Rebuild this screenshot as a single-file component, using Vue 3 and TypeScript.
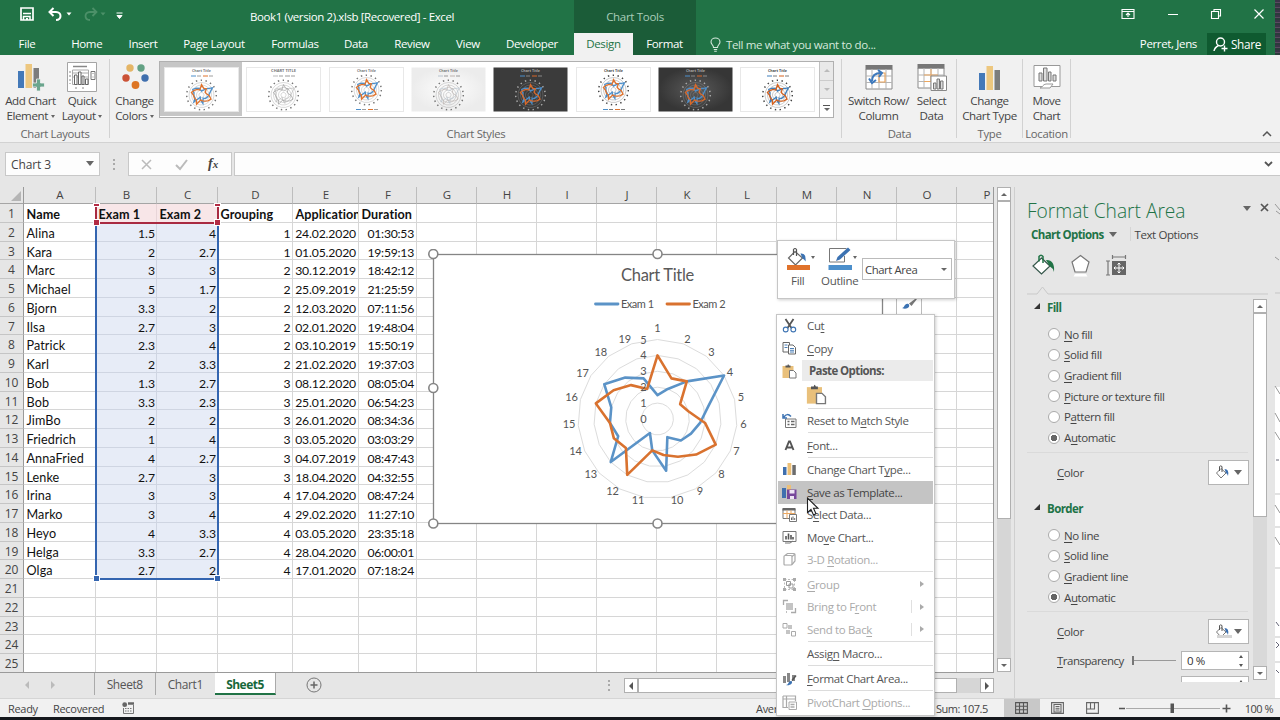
<script setup lang="ts">
interface IconDef { w: number; h: number; b: string }

const sheetGrid = '<path d="M1 5h26v20H1z" fill="#fff" stroke="#8a8a8a"/><path d="M.5 1h27v4.500H.5z" fill="#777"/><path d="M1 12h26M1 18.500h26M7 5v20M14 5v20M21 5v20" stroke="#b5b5b5" fill="none"/>'
const bucket = '<path d="M8 4.500 15.500 11 8.500 18 1.500 11z" fill="#fff" stroke="#666" stroke-width="1.200"/><path d="M6.500 8V2.500q1.500-2 3 0V9" fill="none" stroke="#555" stroke-width="1.200"/>'

const icons: Record<string, IconDef> = {
  save: { w: 14, h: 14, b: '<path d="M1 1h12v12H1z" fill="none" stroke="#fff" stroke-width="1.700"/><path d="M3 6.500h8M3.500 13V9.500h6.500V13" fill="none" stroke="#fff" stroke-width="1.500"/><path d="M6 11h2v2H6z" fill="#fff"/>' },
  undo: { w: 14, h: 14, b: '<path d="M5.500 1 1.500 5l4 4M2 5h6c6 0 6 8 0 8" fill="none" stroke="#fff" stroke-width="2"/>' },
  redo: { w: 14, h: 14, b: '<path d="M8.500 1 12.500 5l-4 4M12 5H6c-6 0-6 8 0 8" fill="none" stroke="#4c9068" stroke-width="1.800"/>' },
  caret: { w: 6, h: 4, b: '<path d="M.5.5h5L3 3.500z" fill="currentColor"/>' },
  customize: { w: 7, h: 7, b: '<path d="M.5 1h6M1 3.500h5L3.500 6.500z" stroke="#fff" fill="#fff" stroke-width="1"/>' },
  ribbonOpt: { w: 14, h: 12, b: '<path d="M1 1.500h12v9H1zM1 3.500h12M7 9V5.500M5 7l2-2 2 2" fill="none" stroke="#fff" stroke-width="1.100"/>' },
  min: { w: 12, h: 12, b: '<path d="M1 6.500h10" stroke="#fff"/>' },
  restore: { w: 12, h: 12, b: '<path d="M1.500 3.500h7v7h-7zM4 3V1.500h6.500V8H9" fill="none" stroke="#fff" stroke-width="1.100"/>' },
  close: { w: 12, h: 12, b: '<path d="m1.500 1.500 9 9M10.500 1.500l-9 9" stroke="#fff" stroke-width="1.200"/>' },
  bulb: { w: 11, h: 15, b: '<path d="M3.500 10.500C3.500 8 1 7.500 1 5a4.500 4 0 0 1 9 0c0 2.500-2.500 3-2.500 5.500zM3.800 12.500h3.400M4.200 14.200h2.600" fill="none" stroke="#d5e8dc" stroke-width="1.100"/>' },
  person: { w: 15, h: 15, b: '<circle cx="7.500" cy="5" r="4" fill="none" stroke="#fff" stroke-width="1.400"/><path d="M1 14c.5-3 2.500-4.500 4.500-5.500M11.500 8.500v6M8.500 11.500h6" fill="none" stroke="#fff" stroke-width="1.400"/>' },
  addElement: { w: 27, h: 27, b: '<path d="M1 8h6v17H1z" fill="#4479b8"/><path d="M8.500 1H15v24H8.500z" fill="#edc77f"/><path d="M16.500 5H22v20h-5.500z" fill="#7d7d7d"/><path d="M19.500 16h4v4h4v4h-4v4h-4v-4h-4v-4h4z" fill="#6aa58d" stroke="#f1f1f1" stroke-width=".8"/>' },
  quickLayout: { w: 30, h: 30, b: '<path d="M.5.500h29v29H.5z" fill="#fff" stroke="#a5a5a5"/><path d="M6 4.500h14" stroke="#888" stroke-width="1.500"/><path d="M5.500 8v14.500h16V8zM5.500 11h16M5.500 15h16" fill="none" stroke="#aaa"/><path d="M7.500 13h2.500v9.500H7.500zM11.500 10H14v12.500h-2.500zM15 14h2v8.500h-2zM18.500 17h2.500v5.500h-2.500z" fill="#fff" stroke="#666"/><path d="M24 9.500h4v8h-4z" fill="none" stroke="#777"/><path d="M25.500 11.500h1M25.500 15h1M3 9v13M8 26h4M15 26h4" stroke="#888" stroke-dasharray="2 2"/>' },
  colors: { w: 28, h: 26, b: '<circle cx="9" cy="4" r="3.700" fill="#e4b566"/><circle cx="20" cy="4" r="3.700" fill="#63a184"/><circle cx="5" cy="14" r="3.700" fill="#cb5236"/><circle cx="24" cy="14" r="3.700" fill="#3f6fae"/><circle cx="14.500" cy="21" r="3.900" fill="#dd7524"/>' },
  switchRow: { w: 28, h: 26, b: sheetGrid + '<path d="M14 9h6v9h-6z" fill="none" stroke="#eba760" stroke-width="1.200"/><path d="M7 17c0-6 4-8 9-8M4 14.500l3 4.500 4-3M13 6l4 3-3 4" fill="none" stroke="#3d79bd" stroke-width="2"/>' },
  selectData: { w: 30, h: 28, b: sheetGrid + '<path d="M7 12h14M7 18.500h7M14 6v12" stroke="#eba760" fill="none"/><path d="M14 13h15.500v14.500H14z" fill="#fff" stroke="#888"/><path d="M16.500 20h2.500v6h-2.500zM20 16h2.500v10H20zM23.500 18H26v8h-2.500z" fill="#ddd" stroke="#777"/>' },
  chartType: { w: 23, h: 25, b: '<path d="M1 8h6v17H1z" fill="#4479b8"/><path d="M8.500 1H15v24H8.500z" fill="#edc77f"/><path d="M16.500 5H22v20h-5.500z" fill="#7d7d7d"/>' },
  moveChart: { w: 28, h: 26, b: '<path d="M1 1.500h26v21H1z" fill="#fff" stroke="#999"/><path d="M6 9h3v8H6zM10.500 4H14v13h-3.500zM15.500 8H18v9h-2.500zM20 11h3v6h-3z" fill="#ddd" stroke="#777"/><path d="M7 24c2 0 3-4 6-4h7l-3 4z" fill="#fff" stroke="#999"/>' },
  bucketOrange: { w: 23, h: 23, b: bucket + '<path d="M13.500 6.500q6-1 5 8-1-2-3-3z" fill="#3b72b2"/><path d="M0 18h23v5H0z" fill="#e0722b"/>' },
  outline: { w: 24, h: 23, b: '<path d="M1.500 1.500h17M1.500 1.500V15M1.500 15h15V9" fill="none" stroke="#777"/><path d="m8 14 1.500-4L20 .5l2.500 2.500L12 12.500z" fill="#3b72b2"/><path d="M.5 18H24v5H.5z" fill="#4c8fcb"/>' },
  brush: { w: 16, h: 12, b: '<path d="M1 9c3 0 2-5 6.500-4 2.500 3-2 6-6.500 4z" fill="#3b72b2"/><path d="M8 4.500 14 0h2l-5.500 7z" fill="#777"/>' },
  cut: { w: 15, h: 15, b: '<path d="M3.500 1 9.500 10M11.500 1l-6 9" stroke="#555" stroke-width="1.800"/><circle cx="3.700" cy="11.500" r="2.400" fill="none" stroke="#3b72b2" stroke-width="1.100"/><circle cx="11.300" cy="11.500" r="2.400" fill="none" stroke="#3b72b2" stroke-width="1.100"/>' },
  copy: { w: 15, h: 15, b: '<path d="M1 1.500h6.500V11H1z" fill="#fff" stroke="#666"/><path d="M6.500 4h4.500l2.500 2.500V13h-7z" fill="#fff" stroke="#666"/><path d="M2.500 4h3M2.500 6.500h3M8 7.500h4M8 9.300h4M8 11h4" stroke="#4d80b8"/>' },
  paste: { w: 15, h: 16, b: '<path d="M.5 3h11v12H.5z" fill="#e9c07b"/><path d="M3.500 2.500h2q.5-2.500 1.500 0h1.500v2h-5z" fill="#555"/><path d="M7.500 7.500h4l2.500 2.500v5H7.500z" fill="#fff" stroke="#777"/>' },
  reset: { w: 15, h: 15, b: '<path d="M3.500 6H14v8.500H3.500z" fill="#fff" stroke="#777"/><path d="M5.500 8.500h2M9 8.500h3.500M5.500 11.500h2M9 11.500h3.500" stroke="#666" stroke-width="1.400"/><path d="M9 3.500Q5-.5 2 4M1 1v4h4" fill="none" stroke="#3b72b2" stroke-width="1.500"/>' },
  fontA: { w: 15, h: 15, b: '<path d="M3.500 12 7 3.500h1L11.500 12M5 9.500h5" fill="none" stroke="#555" stroke-width="1.900"/>' },
  bars: { w: 15, h: 14, b: '<path d="M1 5h3.500v8H1z" fill="#3f6fae"/><path d="M5.500 1h3.800v12H5.500z" fill="#edc077"/><path d="M10.300 3h3.500v10h-3.500z" fill="#6c6c6c"/>' },
  saveTpl: { w: 15, h: 14, b: '<path d="M0 3h4v10H0z" fill="#3f6fae"/><path d="M5 0h4v6H5z" fill="#edc077"/><path d="M5 4.500h9.500V14H5z" fill="#77479b"/><path d="M7.500 5h5v3.500h-5zM8 11h4v3H8z" fill="#efe6f5"/>' },
  selData: { w: 15, h: 15, b: '<path d="M1 2h12v9.500H1z" fill="#fff" stroke="#777"/><path d="M.5 1h13v2.500H.5z" fill="#666"/><path d="M1 6.500h12M5 3.500v8M9 3.500v8" stroke="#eba760"/><path d="M7.500 7.500h7v7h-7z" fill="#fff" stroke="#777"/><path d="M9.500 13v-2.500M11 13V9.500M12.700 13v-2" stroke="#666"/>' },
  movChart: { w: 15, h: 14, b: '<path d="M1 1.500h13v10H1z" fill="#fff" stroke="#777"/><path d="M4 9.500V6M6.500 9.500V3.500M9 9.500V5M11 9.500V7" stroke="#555" stroke-width="1.600"/><path d="M3 13h5l3-2" fill="none" stroke="#777"/>' },
  rot3d: { w: 15, h: 14, b: '<path d="M2 4.500q0-1 1-1h6q1 0 1 1V12q0 1-1 1H3q-1 0-1-1z" fill="#fff" stroke="#aaa" stroke-width="1.200"/><path d="M3 3.500 5.500 1.500H12q1 0 1 1V9l-3 3.500M10 4.500l3-2.500" fill="none" stroke="#aaa" stroke-width="1.200"/>' },
  group: { w: 15, h: 15, b: '<path d="M2.500 2.500h10v10h-10z" fill="none" stroke="#bbb" stroke-dasharray="2 1.500"/><path d="M4.500 4.500h4v4h-4zM7 7h4v4H7z" fill="none" stroke="#999"/><path d="M1 1h3v3H1zM11 1h3v3h-3zM1 11h3v3H1zM11 11h3v3h-3z" fill="#aaa"/>' },
  front: { w: 15, h: 15, b: '<path d="M1.500 6V1.500H6M5 13h-1M9 13.500h4.500V9" stroke="#aaa" fill="none" stroke-width="1.300"/><path d="M4 4h7v7H4z" fill="#c4c4c4"/>' },
  back: { w: 15, h: 15, b: '<path d="M1 1.500h4V6H1zM9.500 9.500h4V14h-4z" fill="#fff" stroke="#aaa"/><path d="M6 3h4v4H6zM4 8h4v4H4z" fill="#c4c4c4"/>' },
  none: { w: 15, h: 15, b: '' },
  fmtArea: { w: 15, h: 15, b: '<path d="M1 5h3v7H1zM5 2h3v9H5zM10 4h3v6h-3z" fill="#888"/><path d="M4 14c3 0 2-4.500 5.500-4 2 2.500-2 5-5.500 4z" fill="#3b72b2"/><path d="m10 9.500 4-5" stroke="#555" stroke-width="1.500"/>' },
  pivot: { w: 15, h: 15, b: '<path d="M1 1h12.500v5M1 1v11.500h5M1 4h12M4.500 1v11" fill="none" stroke="#aaa" stroke-width="1.200"/><path d="M7 7h7.500v7.500H7z" fill="#fff" stroke="#aaa"/><path d="M8.500 9.500h4M8.500 12h4" stroke="#aaa" stroke-width="1.300"/>' },
  bucketGreen: { w: 23, h: 23, b: '<path d="M9.500 4 18 12 9.500 20 1 12z" fill="#fff" stroke="#35564a" stroke-width="1.200"/><path d="M7 7.500V2.500Q9 0 11 2.500V9" fill="none" stroke="#217346" stroke-width="1.500"/><path d="M14 6q9-.5 8 12-1-4-4-5.500z" fill="#217346"/>' },
  pentagon: { w: 21, h: 23, b: '<path d="M10.500 1.500 19 8l-3 10H5L2 8z" fill="#fff" stroke="#777" stroke-width="1.200"/><path d="M5 20h11l1.500 2.500h-14z" fill="#fff"/>' },
  sizeIcon: { w: 21, h: 22, b: '<path d="M0 7h4M0 21h4M2 7v14M6.500 1v4M19.500 1v4M6.500 3h13" stroke="#777" stroke-width="1.200" fill="none"/><path d="M6 7h14v14H6z" fill="#666"/><path d="M13 9v10M8 14h10M11.500 10.500 13 9l1.500 1.500M11.500 17.500 13 19l1.500-1.500M9.500 12.500 8 14l1.500 1.500M16.500 12.500 18 14l-1.500 1.500" stroke="#fff" fill="none"/>' },
  smallBucket: { w: 14, h: 15, b: '<path d="M6 3.500 11 8l-5 5L1.500 8z" fill="#fff" stroke="#777"/><path d="M4.500 6V1.500q1-1.200 2.500 0V7" fill="none" stroke="#555"/><path d="M9.500 4q5 0 3.500 7-.5-2-2-3z" fill="#3b6fb0"/>' },
  plusCircle: { w: 16, h: 16, b: '<circle cx="8" cy="8" r="7" fill="none" stroke="#777"/><path d="M4.500 8h7M8 4.500v7" stroke="#666" stroke-width="1.500"/>' },
  macro: { w: 12, h: 12, b: '<circle cx="2.700" cy="2.700" r="2.400" fill="#666"/><path d="M6 1.500h6" stroke="#666" stroke-width="2.500"/><path d="M1.500 6v5.500h10V3" fill="none" stroke="#777"/><path d="M3 6.500h7M3 9h7" stroke="#777" stroke-dasharray="1.500 1"/>' },
  viewNormal: { w: 13, h: 12, b: '<path d="M.6.600h11.800v10.800H.6zM.6 4.200h11.800M.6 7.800h11.800M4.500.6v10.800M8.500.6v10.800" fill="none" stroke="#555" stroke-width="1.100"/>' },
  viewPage: { w: 13, h: 12, b: '<path d="M.6.600h11.800v10.800H.6zM3 2.500h7v7.500H3z" fill="none" stroke="#666" stroke-width="1.100"/><path d="M4.500 4.500h4M4.500 6.300h4M4.500 8h4" stroke="#666"/>' },
  viewBreak: { w: 13, h: 12, b: '<path d="M.6.600h11.800v10.800H.6zM4.500.6V7H9M8.500.6V7M.6 7H4" fill="none" stroke="#666" stroke-width="1.100"/>' },
}

const tabs = [
  { t: 'File', c: 'w-file' }, { t: 'Home', c: 'w-home' }, { t: 'Insert', c: 'w-insert' },
  { t: 'Page Layout', c: 'w-page' }, { t: 'Formulas', c: 'w-formulas' }, { t: 'Data', c: 'w-data' },
  { t: 'Review', c: 'w-review' }, { t: 'View', c: 'w-view' }, { t: 'Developer', c: 'w-dev' },
  { t: 'Design', c: 'w-design' }, { t: 'Format', c: 'w-format' },
]

const exam1 = [1.5, 2, 3, 5, 3.3, 2.7, 2.3, 2, 1.3, 3.3, 2, 1, 4, 2.7, 3, 3, 4, 3.3, 2.7]
const exam2 = [4, 2.7, 3, 1.7, 2, 3, 4, 3.3, 2.7, 2.3, 2, 4, 2.7, 3, 3, 4, 3.3, 2.7, 2]
const names = ['Alina', 'Kara', 'Marc', 'Michael', 'Bjorn', 'Ilsa', 'Patrick', 'Karl', 'Bob', 'Bob', 'JimBo', 'Friedrich', 'AnnaFried', 'Lenke', 'Irina', 'Marko', 'Heyo', 'Helga', 'Olga']
const groups = [1, 1, 2, 2, 2, 2, 2, 2, 3, 3, 3, 3, 3, 3, 4, 4, 4, 4, 4]
const dates = ['24.02.2020', '01.05.2020', '30.12.2019', '25.09.2019', '12.03.2020', '02.01.2020', '03.10.2019', '21.02.2020', '08.12.2020', '25.01.2020', '26.01.2020', '03.05.2020', '04.07.2019', '18.04.2020', '17.04.2020', '29.02.2020', '03.05.2020', '28.04.2020', '17.01.2020']
const times = ['01:30:53', '19:59:13', '18:42:12', '21:25:59', '07:11:56', '19:48:04', '15:50:19', '19:37:03', '08:05:04', '06:54:23', '08:34:36', '03:03:29', '08:47:43', '04:32:55', '08:47:24', '11:27:10', '23:35:18', '06:00:01', '07:18:24']

const cols = 'ABCDEFGHIJKLMNOP'.split('')
const rows: (string | number)[][] = Array.from({ length: 25 }, (_, r) => {
  if (r === 0) return ['Name', 'Exam 1', 'Exam 2', 'Grouping', 'Application', 'Duration']
  if (r > names.length) return []
  const i = r - 1
  return [names[i], exam1[i], exam2[i], groups[i], dates[i], times[i]]
})

function pts(values: number[], cx: number, cy: number, unit: number): string {
  return values.map((v, i) => {
    const a = (i / values.length) * Math.PI * 2
    return `${(cx + Math.sin(a) * v * unit).toFixed(2)},${(cy - Math.cos(a) * v * unit).toFixed(2)}`
  }).join(' ')
}
const ring = (v: number, cx: number, cy: number, unit: number) => pts(Array(19).fill(v), cx, cy, unit)

const categoryLabels: [number, number][] = [
  [224.5, 74], [254.500, 85], [278.500, 98.200], [297, 118.200], [308, 143], [310.500, 170.200], [303.500, 197.200],
  [288.500, 219.800], [267, 236.500], [244, 246.200], [205, 246.200], [179.500, 236.800], [157.800, 219.800],
  [142.500, 197.200], [136, 170.200], [138.500, 142.800], [149.500, 118.800], [167.800, 98.200], [191.800, 84.800],
]

const thumbs = [
  { bg: '#fff', ink: '#777', a: '#4c8fcb', b: '#e0722b', low: false, sel: true, t: 'Chart Title' },
  { bg: '#fff', ink: '#777', a: '#bbb', b: '#999', low: false, sel: false, t: 'CHART TITLE' },
  { bg: '#fff', ink: '#777', a: '#4c8fcb', b: '#e0722b', low: true, sel: false, t: 'Chart Title' },
  { bg: 'url(#thumbLight)', ink: '#777', a: '#b9c4cf', b: '#bdb4b0', low: false, sel: false, t: 'Chart Title' },
  { bg: '#3b3b3b', ink: '#aaa', a: '#4c8fcb', b: '#d9692a', low: false, sel: false, t: 'Chart Title' },
  { bg: '#fff', ink: '#444', a: '#4c8fcb', b: '#e0722b', low: true, sel: false, t: 'Chart Title' },
  { bg: 'url(#thumbDark)', ink: '#aaa', a: '#4c8fcb', b: '#d9692a', low: false, sel: false, t: 'Chart Title' },
  { bg: '#fff', ink: '#444', a: '#3f7fbb', b: '#d5601c', low: false, sel: false, t: 'Chart Title' },
]

interface MenuItem { icon?: string; t?: string; off?: boolean; hot?: boolean; sub?: boolean; split?: boolean; kind?: string }
const menu: MenuItem[] = [
  { icon: 'cut', t: 'Cu&t' }, { icon: 'copy', t: '&Copy' },
  { kind: 'head', icon: 'paste', t: 'Paste Options:' }, { kind: 'paste' }, { kind: 'sep' },
  { icon: 'reset', t: 'Reset to M&atch Style' }, { kind: 'sep' },
  { icon: 'fontA', t: '&Font...' }, { kind: 'sep' },
  { icon: 'bars', t: 'Change Chart T&ype...' }, { icon: 'saveTpl', t: '&Save as Template...', hot: true },
  { icon: 'selData', t: 'S&elect Data...' }, { icon: 'movChart', t: 'Mo&ve Chart...' },
  { icon: 'rot3d', t: '3-D &Rotation...', off: true }, { kind: 'sep' },
  { icon: 'group', t: '&Group', off: true, sub: true }, { icon: 'front', t: 'Bring to F&ront', off: true, sub: true, split: true },
  { icon: 'back', t: 'Send to Bac&k', off: true, sub: true, split: true }, { kind: 'sep' },
  { icon: 'none', t: 'Assig&n Macro...' }, { kind: 'sep' },
  { icon: 'fmtArea', t: '&Format Chart Area...' }, { kind: 'sep' },
  { icon: 'pivot', t: 'PivotChart &Options...', off: true },
]
function parts(s: string): [string, string, string] {
  const i = s.indexOf('&')
  return i < 0 ? [s, '', ''] : [s.slice(0, i), s[i + 1], s.slice(i + 2)]
}

const fillOptions = ['&No fill', '&Solid fill', '&Gradient fill', '&Picture or texture fill', 'P&attern fill', 'A&utomatic']
const lineOptions = ['&No line', '&Solid line', '&Gradient line', 'A&utomatic']
</script>

<template>
  <div class="app">
    <header class="head">
      <div class="title-row">
        <div class="qat">
          <svg width="14" height="14" v-html="icons.save.b" />
          <svg class="undo" width="14" height="14" v-html="icons.undo.b" />
          <svg class="c1" width="6" height="4" v-html="icons.caret.b" />
          <svg class="redo" width="14" height="14" v-html="icons.redo.b" />
          <svg class="c2" width="6" height="4" v-html="icons.caret.b" />
          <svg class="cust" width="7" height="7" v-html="icons.customize.b" />
        </div>
        <div class="doc">Book1 (version 2).xlsb [Recovered] - Excel</div>
        <div class="ctx">Chart Tools</div>
        <div class="win">
          <svg width="14" height="12" v-html="icons.ribbonOpt.b" />
          <svg width="12" height="12" v-html="icons.min.b" />
          <svg width="12" height="12" v-html="icons.restore.b" />
          <svg width="12" height="12" v-html="icons.close.b" />
        </div>
      </div>
      <nav class="tab-row">
        <span v-for="t in tabs" :key="t.t" class="tab" :class="t.c">{{ t.t }}</span>
        <span class="tell"><svg width="11" height="15" v-html="icons.bulb.b" /><span>Tell me what you want to do...</span></span>
        <span class="user">Perret, Jens</span>
        <span class="share"><svg width="15" height="15" v-html="icons.person.b" /><span>Share</span></span>
      </nav>
      <div class="head-edge" />
    </header>

    <section class="ribbon">
      <div class="rg g-layouts">
        <div class="rb-row">
          <div class="rb w60"><div class="ri"><svg width="27" height="28" v-html="icons.addElement.b" /></div><span>Add Chart</span><span>Element <i /></span></div>
          <div class="rb w44"><div class="ri"><svg width="30" height="30" v-html="icons.quickLayout.b" /></div><span>Quick</span><span>Layout <i /></span></div>
        </div>
        <label>Chart Layouts</label>
      </div>
      <div class="rg g-styles">
        <div class="rb-row">
          <div class="rb w50"><div class="ri"><svg width="28" height="26" v-html="icons.colors.b" /></div><span>Change</span><span>Colors <i /></span></div>
          <div class="gallery">
            <div v-for="(t, i) in thumbs" :key="i" class="thumb" :class="{ sel: t.sel }">
              <svg width="75" height="45" viewBox="0 0 75 45">
                <defs v-if="i === 0">
                  <radialGradient id="thumbLight"><stop offset="0" stop-color="#fdfdfd" /><stop offset="1" stop-color="#ececec" /></radialGradient>
                  <radialGradient id="thumbDark"><stop offset="0" stop-color="#5a5a5a" /><stop offset="1" stop-color="#363636" /></radialGradient>
                </defs>
                <rect x=".5" y=".5" width="74" height="44" :fill="t.bg" stroke="#e8e8e8" :stroke-width="t.bg === '#fff' ? 1 : 0" />
                <text x="37.500" y="5.200" text-anchor="middle" :font-size="i === 1 ? 4 : 3.6" :fill="t.ink" class="tt">{{ t.t }}</text>
                <g :transform="t.low ? 'translate(0 -5)' : ''">
                  <circle cx="37.500" cy="28" r="14.800" fill="none" :stroke="t.ink" stroke-width="1.500" stroke-dasharray="1.400 3.490" />
                  <polygon v-for="k in 5" :key="k" :points="ring(k, 37.5, 28, 2.5)" fill="none" :stroke="t.ink" stroke-width=".4" opacity=".7" />
                  <polygon :points="pts(exam1, 37.5, 28, 2.6)" fill="none" :stroke="t.a" :stroke-width="i === 1 || i === 3 ? .7 : 1.3" />
                  <polygon :points="pts(exam2, 37.5, 28, 2.6)" fill="none" :stroke="t.b" :stroke-width="i === 1 || i === 3 ? .7 : 1.3" />
                </g>
                <path :d="t.low ? 'M27 42.500h5' : 'M27 9h5'" :stroke="t.a" /><path :d="t.low ? 'M39 42.500h5' : 'M39 9h5'" :stroke="t.b" />
                <path :d="t.low ? 'M33 42.500h4M45 42.500h4' : 'M33 9h4M45 9h4'" :stroke="t.ink" opacity=".7" />
              </svg>
            </div>
            <div class="gscroll"><b class="up dim" /><b class="down dim" /><b class="down more" /></div>
          </div>
        </div>
        <label>Chart Styles</label>
      </div>
      <div class="rg g-data">
        <div class="rb-row">
          <div class="rb w69"><div class="ri"><svg width="28" height="26" v-html="icons.switchRow.b" /></div><span>Switch Row/</span><span>Column</span></div>
          <div class="rb w37"><div class="ri"><svg width="30" height="28" v-html="icons.selectData.b" /></div><span>Select</span><span>Data</span></div>
        </div>
        <label>Data</label>
      </div>
      <div class="rg g-type">
        <div class="rb-row"><div class="rb wfull"><div class="ri"><svg width="23" height="25" v-html="icons.chartType.b" /></div><span>Change</span><span>Chart Type</span></div></div>
        <label>Type</label>
      </div>
      <div class="rg g-loc">
        <div class="rb-row"><div class="rb wfull"><div class="ri"><svg width="28" height="26" v-html="icons.moveChart.b" /></div><span>Move</span><span>Chart</span></div></div>
        <label>Location</label>
      </div>
      <svg class="collapse" width="10" height="6"><path d="M1 5l4-4 4 4" fill="none" stroke="#555" stroke-width="1.500" /></svg>
    </section>

    <section class="fbar">
      <div class="namebox"><span>Chart 3</span><i /></div>
      <div class="grip" />
      <div class="fxbox">
        <svg width="11" height="11"><path d="M1 1l9 9M10 1 1 10" stroke="#bbb" stroke-width="1.500" /></svg>
        <svg width="13" height="11"><path d="M1 6l4 4 7-9" fill="none" stroke="#bbb" stroke-width="2" /></svg>
        <em>f<small>x</small></em>
      </div>
      <div class="finput"><svg width="9" height="6"><path d="M1 1l3.500 3.500L8 1" fill="none" stroke="#555" stroke-width="1.800" /></svg></div>
    </section>

    <main class="main">
      <div class="book">
        <div class="sheet-area">
          <div class="sheet">
            <div class="hrow"><div class="corner"><i /></div><div v-for="c in cols" :key="c" class="hc" :class="'c' + c">{{ c }}</div></div>
            <div v-for="(r, ri) in rows" :key="ri" class="row" :class="{ first: ri === 0 }">
              <div class="rh">{{ ri + 1 }}</div>
              <div v-for="(c, ci) in cols" :key="c" class="cell" :class="['c' + c, { red: ri === 0 && (ci === 1 || ci === 2), blue: ri > 0 && ri < 20 && (ci === 1 || ci === 2) }]">{{ r[ci] }}</div>
            </div>

            <div class="range-blue"><b /><b /></div>
            <div class="range-red"><b /><b /><b /><b /></div>

            <svg class="chart" width="460" height="282" viewBox="-5 -5 460 282">
              <rect x=".5" y=".5" width="449" height="269" fill="#fff" stroke="#858585" stroke-width="1.300" />
              <text x="224.500" y="26.500" class="ctitle">Chart Title</text>
              <path d="M162.500 50h22.500" stroke="#5b93c7" stroke-width="2.800" stroke-linecap="round" />
              <text x="204.300" y="53.700" class="clab leg">Exam 1</text>
              <path d="M234 50h22.500" stroke="#d9722f" stroke-width="2.800" stroke-linecap="round" />
              <text x="275.800" y="53.700" class="clab leg">Exam 2</text>
              <polygon v-for="k in 5" :key="k" :points="ring(k, 224.5, 165, 15.9)" fill="none" stroke="#dcdcdc" />
              <polygon :points="pts(exam1, 224.5, 165, 15.9)" fill="none" stroke="#5b93c7" stroke-width="2.600" stroke-linejoin="round" />
              <polygon :points="pts(exam2, 224.5, 165, 15.9)" fill="none" stroke="#d9722f" stroke-width="2.600" stroke-linejoin="round" />
              <text v-for="k in 6" :key="'a' + k" x="210.400" :y="169 - (k - 1) * 15.9" class="clab">{{ k - 1 }}</text>
              <text v-for="(p, i) in categoryLabels" :key="'l' + i" :x="p[0]" :y="p[1] + 4" class="clab">{{ i + 1 }}</text>
              <circle v-for="(p, i) in [[.3, 0], [224.5, 0], [.3, 134], [.3, 269.5], [224.5, 269.5]]" :key="'h' + i" :cx="p[0]" :cy="p[1]" r="4.500" fill="#fff" stroke="#858585" stroke-width="1.600" />
            </svg>
            <div class="chart-btn"><svg width="16" height="12" v-html="icons.brush.b" /></div>
          </div>
          <div class="vscroll"><b class="btn up" /><div class="thumb-v" /><b class="btn down" /></div>
        </div>
        <div class="sheet-tabs">
          <div class="arrows"><i class="l" /><i class="r" /></div>
          <span class="st">Sheet8</span><span class="st">Chart1</span><span class="st on">Sheet5</span>
          <svg class="plus" width="16" height="16" v-html="icons.plusCircle.b" />
          <div class="grip" />
          <div class="hscroll"><b class="hb"><i class="l" /></b><div class="thumb-h" /><b class="hb"><i class="r" /></b></div>
        </div>
      </div>

      <aside class="pane">
        <div class="p-title"><span>Format Chart Area</span><i /><svg width="9" height="9"><path d="M1 1l7 7M8 1 1 8" stroke="#555" stroke-width="1.700" /></svg></div>
        <div class="p-tabs"><strong>Chart Options</strong><i /><s /><span>Text Options</span></div>
        <div class="p-icons">
          <svg width="23" height="23" v-html="icons.bucketGreen.b" />
          <svg width="21" height="23" v-html="icons.pentagon.b" />
          <svg width="21" height="22" v-html="icons.sizeIcon.b" />
        </div>
        <svg class="notch" width="241" height="9"><path d="M0 8h10l5.500-7 5.500 7h220" fill="none" stroke="#c9c9c9" /></svg>
        <div class="p-body">
          <div class="p-content">
            <div class="p-sec"><i /><strong>Fill</strong></div>
            <div class="radios">
              <div v-for="(o, i) in fillOptions" :key="o" class="radio"><b :class="{ on: i === 5 }" /><span>{{ parts(o)[0] }}<u>{{ parts(o)[1] }}</u>{{ parts(o)[2] }}</span></div>
            </div>
            <div class="p-color"><span><u>C</u>olor</span><div class="cbtn"><svg width="14" height="15" v-html="icons.smallBucket.b" /><i /></div></div>
            <div class="p-sec second"><i /><strong>Border</strong></div>
            <div class="radios">
              <div v-for="(o, i) in lineOptions" :key="o" class="radio"><b :class="{ on: i === 3 }" /><span>{{ parts(o)[0] }}<u>{{ parts(o)[1] }}</u>{{ parts(o)[2] }}</span></div>
            </div>
            <div class="p-color"><span><u>C</u>olor</span><div class="cbtn line"><svg width="14" height="15" v-html="icons.smallBucket.b" /><i /></div></div>
            <div class="p-num"><span><u>T</u>ransparency</span><div class="slider" /><div class="spin">0 %<em><i class="u" /><i /></em></div></div>
            <div class="p-num wd"><span><u>W</u>idth</span><div class="spin">0.75 pt<em><i class="u" /><i /></em></div></div>
          </div>
          <div class="pscroll"><b class="btn up" /><div class="thumb-p" /><b class="btn down" /></div>
        </div>
      </aside>
      <div class="edge">
        <svg width="5" height="511"><path d="M0 200h5v311H0z" fill="#fff" /><path d="M0 17l5 6M1 24l4 3M0 70l4 3M0 199l5 8M0 226l5 9M0 318l5 8M0 350l5 8M0 245l5 8" stroke="#999" fill="none" /><path d="M0 106h5M0 307h5M0 340h5M0 381h5M0 450h5M0 475h5" stroke="#c5c5c5" /><path d="M1 273h3M1 435l3 4M1 455l3 3-3 3M1 483l3 3" stroke="#667" fill="none" /></svg>
      </div>
    </main>

    <footer class="status">
      <span class="s-ready">Ready</span><span class="s-rec">Recovered</span>
      <svg class="s-mac" width="12" height="12" v-html="icons.macro.b" />
      <span class="s-avg">Average: 2.829</span><span class="s-sum">Sum: 107.5</span>
      <div class="views"><b class="on"><svg width="13" height="12" v-html="icons.viewNormal.b" /></b><b><svg width="13" height="12" v-html="icons.viewPage.b" /></b><b><svg width="13" height="12" v-html="icons.viewBreak.b" /></b></div>
      <svg class="zoom" width="114" height="14"><path d="M1 7.500h6M104.500 7.500h8M108.500 3.500v8" stroke="#555" stroke-width="1.600" /><path d="M8 7.500h94" stroke="#aaa" /><path d="M52.500 2.500h3.500v9.500h-3.500z" fill="#555" /></svg>
      <span class="s-zoom">100 %</span>
    </footer>
    <div class="taskbar" />

    <div class="mini">
      <div class="m-b"><svg width="23" height="23" v-html="icons.bucketOrange.b" /><i /><span>Fill</span></div>
      <div class="m-b m-o"><svg width="24" height="23" v-html="icons.outline.b" /><i /><span>Outline</span></div>
      <div class="m-sel"><span>Chart Area</span><i /></div>
    </div>

    <div class="menu">
      <template v-for="(m, i) in menu" :key="i">
        <div v-if="m.kind === 'sep'" class="sep" />
        <div v-else-if="m.kind === 'paste'" class="mpaste"><svg width="21" height="22" viewBox="0 0 15 16" v-html="icons.paste.b" /></div>
        <div v-else class="mi" :class="{ off: m.off, hot: m.hot, mhead: m.kind === 'head' }">
          <svg width="15" height="15" v-html="icons[m.icon!].b" />
          <span>{{ parts(m.t!)[0] }}<u>{{ parts(m.t!)[1] }}</u>{{ parts(m.t!)[2] }}</span>
          <em v-if="m.sub" :class="{ split: m.split }"><i /></em>
        </div>
      </template>
    </div>
    <svg class="cursor" width="14" height="20"><path d="M1.500 1v14.500l3.500-3.200 2.500 5.700 2.500-1.200-2.500-5.500h4.500z" fill="#fff" stroke="#222" stroke-width="1.100" /></svg>
  </div>
</template>

<style>
body { overflow: hidden; background: #e6e6e6; }
</style>

<style scoped>
* { box-sizing: border-box; }
svg { display: block; flex: none; overflow: visible; }
i { font-style: normal; }
.app { position: relative; width: 1280px; height: 720px; overflow: hidden; display: flex; flex-direction: column; background: #e6e6e6; font-family: "Open Sans", "Noto Sans", sans-serif; font-size: 11.5px; letter-spacing: -0.4px; color: #444; white-space: nowrap; }

.head { height: 55px; background: #217346; color: #fff; position: relative; flex: none; }
.title-row { display: flex; height: 33px; }
.qat { width: 250px; display: flex; align-items: center; padding: 0 0 5px 20px; }
.undo { margin-left: 14px; } .c1 { margin-left: 4px; } .redo { margin-left: 12px; } .c2 { margin-left: 2px; color: #4c9068; } .cust { margin: 3px 0 0 10px; }
.doc { width: 324px; line-height: 33px; }
.ctx { width: 122px; background: #1b5c38; color: #a9cdb8; text-align: center; line-height: 33px; letter-spacing: -0.3px; }
.win { margin-left: auto; display: flex; align-items: center; gap: 31.200px; padding: 0 15px 5px 0; }
.tab-row { display: flex; height: 22px; line-height: 21px; letter-spacing: -0.35px; }
.tab { text-align: center; flex: none; }
.w-file { width: 54px; } .w-home { width: 65.4px; } .w-insert { width: 47.2px; } .w-page { width: 94.800px; } .w-formulas { width: 67.2px; }
.w-data { width: 54.800px; } .w-review { width: 57.2px; } .w-view { width: 54.800px; } .w-dev { width: 73.200px; margin-right: 5.4px; }
.w-design { width: 59px; background: #f1f1f1; color: #217346; } .w-format { width: 63px; background: #1b5c38; }
.tell { display: flex; margin-left: 14px; color: #d5e8dc; align-items: center; gap: 5px; width: 200px; flex: none; }
.user { margin-left: auto; }
.share { width: 59px; flex: none; margin: 0 14px 0 10px; background: #0f5a30; display: flex; align-items: center; gap: 3px; padding-left: 6px; font-size: 11.800px; }
.head-edge { position: absolute; right: 0; top: 0; width: 5px; height: 55px; background: repeating-linear-gradient(180deg, #3b3348 0 2px, #5a4a60 2px 3px, #2c3a3c 3px 5px); }

.ribbon { height: 88px; background: #f1f1f1; border-bottom: 1px solid #d2d2d2; display: flex; flex: none; position: relative; }
.rg { display: flex; flex-direction: column; justify-content: space-between; position: relative; height: 87px; }
.rg::after { content: ""; position: absolute; right: 0; top: 4px; bottom: 4px; width: 1px; background: #d2d2d2; }
.rg label { text-align: center; height: 15px; line-height: 14px; color: #666; font-size: 11.300px; letter-spacing: -0.3px; }
.g-layouts { width: 110px; } .g-styles { width: 732px; } .g-data { width: 115px; } .g-type { width: 66px; } .g-loc { width: 48px; }
.g-type label, .g-loc label { padding-right: 1px; }
.rb-row { display: flex; }
.g-data .rb-row { padding-left: 2px; }
.rb { display: flex; flex-direction: column; align-items: center; line-height: 15px; color: #444; font-size: 11.600px; letter-spacing: -0.4px; }
.ri { height: 38px; padding-top: 6px; display: flex; align-items: center; }
.rb i, .namebox i, .m-b i, .m-sel i { display: inline-block; border: 3px solid transparent; border-top: 3.5px solid #666; border-bottom: 0; vertical-align: middle; }
.rb i { border-width: 3px 2.500px 0; }
.w60 { width: 61px; } .w44 { width: 42px; } .w50 { width: 49px; } .w69 { width: 69px; } .w37 { width: 37px; } .g-type .wfull { width: 65px; } .g-loc .wfull { width: 47px; }
.gallery { display: flex; margin-top: 6px; height: 56.500px; width: 675px; border: 1px solid #b0b0b0; background: #fff; align-items: flex-start; }
.thumb { width: 82.600px; height: 54px; padding: 4.500px 0 0 3.800px; }
.thumb.sel { background: #c6c6c6; }
.tt { font-family: "Open Sans", sans-serif; font-weight: 700; letter-spacing: 0; }
.gscroll { margin-left: auto; width: 14px; height: 100%; border-left: 1px solid #c0c0c0; display: flex; flex-direction: column; }
.gscroll b { flex: 1; display: flex; align-items: center; justify-content: center; background: #e9e9e9; border-bottom: 1px solid #ccc; }
.gscroll .more { background: #fff; border: 0; flex-direction: column; gap: 2px; }
.gscroll .more::before { content: ""; width: 7px; height: 1px; background: #555; }
.up::after, .down::after { content: ""; border: 3px solid transparent; border-bottom: 3.500px solid #666; border-top: 0; }
.down::after { border-top: 3.500px solid #666; border-bottom: 0; }
.dim::after { border-top-color: #bbb; border-bottom-color: #bbb; }
.collapse { position: absolute; right: 8px; bottom: 5px; }

.fbar { height: 44px; flex: none; display: flex; padding: 9px 0 11px 5px; align-items: stretch; }
.namebox { width: 95px; border: 1px solid #c8c8c8; background: #fdfdfd; display: flex; align-items: center; justify-content: space-between; padding: 1px 5px 0; font-size: 12px; letter-spacing: -0.1px; }
.namebox i { border-width: 5px 4px 0; margin-bottom: 2px; }
.grip { width: 2px; height: 11px; background: repeating-linear-gradient(180deg, #aaa 0 2px, transparent 2px 4.500px); margin: 7px 12px 0 13px; }
.fxbox { width: 104px; margin-left: 1px; border: 1px solid #c8c8c8; background: #fdfdfd; display: flex; align-items: center; padding-left: 12px; gap: 23px; }
.fxbox em { font: italic bold 14px/20px "Liberation Serif", serif; color: #444; letter-spacing: 0; margin-left: -3px; }
.fxbox small { font-size: 11px; }
.finput { flex: 1; margin-left: 2px; border: 1px solid #c8c8c8; border-right: 0; background: #fdfdfd; display: flex; justify-content: flex-end; align-items: center; padding-right: 7px; }

.main { height: 511px; display: flex; flex: none; }
.book { width: 1014px; display: flex; flex-direction: column; }
.sheet-area { display: flex; height: 485px; }
.sheet { position: relative; width: 994px; height: 485.500px; overflow: hidden; background: #fff; border-right: 1px solid #9a9a9a; border-bottom: 1px solid #9a9a9a; }
.hrow { display: flex; height: 17px; background: #e6e6e6; width: 1100px; }
.hc { text-align: center; line-height: 16px; border-right: 1px solid #bdbdbd; border-bottom: 1px solid #a5a5a5; font-size: 11.500px; flex: none; letter-spacing: 0; padding-left: 1px; }
.corner { width: 24px; flex: none; border-right: 1px solid #9a9a9a; border-bottom: 1px solid #a5a5a5; display: flex; justify-content: flex-end; align-items: flex-end; padding: 2px; }
.corner i { border: 5px solid transparent; border-right-color: #b5b5b5; border-bottom-color: #b5b5b5; }
.row { display: flex; height: 18.760px; width: 1100px; }
.rh { width: 24px; flex: none; background: #e6e6e6; border-right: 1px solid #9a9a9a; border-bottom: 1px solid #c5c5c5; text-align: center; line-height: 20px; font-size: 12px; letter-spacing: 0; }
.cell { flex: none; border-right: 1px solid #d6d6d6; border-bottom: 1px solid #d6d6d6; font: 12.200px/21px Lato, sans-serif; letter-spacing: 0; color: #111; text-align: right; padding: 0 1px; overflow: hidden; }
.cell.cA, .first .cell { text-align: left; padding-left: 2.500px; font-size: 12.600px; letter-spacing: 0.1px; }
.first .cell { font-weight: 700; }
.row:not(.first) .cE { letter-spacing: -0.15px; padding-right: 2px; font-size: 12.200px; }
.row:not(.first) .cF { letter-spacing: -0.25px; padding-right: 2px; font-size: 12.200px; }
.row:not(.first) .cD { padding-right: 1.500px; }
.cA { width: 72px; } .cB, .cC { width: 61px; } .cD { width: 75px; } .cE { width: 66px; } .cF { width: 58px; }
.cG, .cH, .cI, .cJ, .cK, .cL, .cM, .cN, .cO, .cP { width: 60px; }
.red { background: #f8e6e8; border-right-color: #e8d5d8; }
.blue { background: #e7ecf7; border-color: #cfd5e2; }
.range-blue, .range-red { position: absolute; }
.range-blue { left: 95px; top: 35px; width: 124px; height: 357.500px; border: 2px solid #3465b0; border-top: 0; }
.range-red { left: 95px; top: 17px; width: 124px; height: 20px; border: 2px solid #a92a41; border-top: 0; }
.range-blue b, .range-red b { position: absolute; width: 5px; height: 5px; background: #3465b0; box-shadow: 0 0 0 1px #fff; }
.range-red b { background: #b32c45; }
.range-blue b { bottom: -3px; } .range-blue b:nth-child(1), .range-red b:nth-child(odd) { left: -3px; } .range-blue b:nth-child(2), .range-red b:nth-child(even) { right: -3px; }
.range-red b:nth-child(-n+2) { top: 0; height: 2px; } .range-red b:nth-child(n+3) { bottom: -3px; }
.chart { position: absolute; left: 428px; top: 62px; overflow: hidden; }
.ctitle { font: 16.500px Lato, sans-serif; fill: #595959; text-anchor: middle; letter-spacing: -0.3px; }
.clab { font: 11px Lato, sans-serif; fill: #555; text-anchor: middle; letter-spacing: -0.1px; }
.leg { letter-spacing: -0.45px; }
.chart-btn { position: absolute; left: 896px; top: 100px; width: 26px; height: 30px; background: #fff; border: 1px solid #bbb; padding: 11px 4px; }
.vscroll { width: 14px; margin-left: 3px; display: flex; flex-direction: column; background: #d6d6d6; }
.btn { height: 14px; flex: none; background: #fff; border: 1px solid #b0b0b0; display: flex; align-items: center; justify-content: center; }
.thumb-v { height: 318px; background: #fff; border: 1px solid #b0b0b0; margin-bottom: auto; }
.sheet-tabs { height: 26px; display: flex; align-items: flex-start; }
.arrows { width: 94px; display: flex; gap: 22px; padding: 9px 0 0 25px; }
.l, .r { border: 4px solid transparent; border-right: 4px solid #bbb; border-left: 0; height: 0; }
.r { border-left: 4px solid #bbb; border-right: 0; }
.st { width: 60.500px; text-align: center; line-height: 25px; font-size: 12px; height: 23px; border-left: 1px solid #aaa; color: #555; }
.st.on { width: 61px; background: #fff; color: #17683a; font-weight: 700; border-bottom: 2px solid #217346; border-left: 0; border-right: 1px solid #aaa; letter-spacing: -0.5px; }
.plus { margin: 5px 0 0 30px; }
.sheet-tabs .grip { margin: 8px 0 0 286px; }
.hscroll { margin: 6px 0 0 14px; width: 370px; height: 15px; display: flex; background: #d6d6d6; }
.hb { width: 14px; background: #fff; border: 1px solid #b0b0b0; display: flex; align-items: center; justify-content: center; }
.hb .l { border-right-color: #555; } .hb .r { border-left-color: #555; }
.thumb-h { width: 319px; background: #fff; border: 1px solid #b0b0b0; margin-right: auto; }

.pane { width: 261px; border-left: 1px solid #cfcfcf; padding-left: 12px; display: flex; flex-direction: column; }
.p-title { display: flex; height: 37px; padding-top: 10px; color: #217346; font-size: 19.200px; font-weight: 300; line-height: 28px; letter-spacing: -0.02px; }
.p-title span { width: 216px; }
.p-title i, .p-tabs i, .cbtn i { border: 4px solid transparent; border-top: 5px solid #666; border-bottom: 0; height: 0; }
.p-title i { margin-top: 9px; } .p-title svg { margin: 6px 0 0 9px; }
.p-tabs { display: flex; align-items: center; height: 20px; padding-left: 4px; color: #444; }
.p-tabs strong { color: #217346; width: 77.500px; letter-spacing: -0.6px; } .p-tabs s { width: 1px; height: 14px; background: #d5d5d5; margin: 0 4px 0 13px; }
.p-icons { display: flex; padding: 10px 0 0 5px; height: 42px; gap: 15px; }
.p-body { height: 385px; margin-top: 2px; display: flex; padding-top: 2px; }
.p-content { width: 226px; height: 383px; overflow: hidden; display: flex; flex-direction: column; flex: none; }
.p-sec { display: flex; align-items: center; height: 16.500px; color: #217346; letter-spacing: -0.6px; flex: none; }
.p-sec i { border: 3.500px solid transparent; border-right-color: #333; border-bottom-color: #333; margin: 0 7px 3px 7px; }
.radios { padding: 7.500px 0 4px 21px; margin-top: 1px; border-bottom: 1px solid #dadada; flex: none; margin-right: 5px; }
.radio { display: flex; align-items: center; height: 20.650px; gap: 4px; }
.radio b { width: 12px; height: 12px; border-radius: 50%; background: #fff; border: 1px solid #aaa; }
.radio b.on { background: radial-gradient(circle, #666 0 3px, #fff 3.500px); }
u { text-underline-offset: 2px; }
.p-color { display: flex; justify-content: space-between; align-items: center; padding: 7px 4px 0 30px; flex: none; }
.cbtn { width: 41px; height: 25px; background: #fff; border: 1px solid #b5b5b5; display: flex; align-items: center; justify-content: center; gap: 5px; }
.cbtn.line { position: relative; }
.cbtn.line::after { content: ""; position: absolute; left: 8px; bottom: 5px; width: 15px; height: 3px; background: #d5d5d5; }
.second { margin-top: 15px; }
.p-num { display: flex; align-items: center; padding: 6.500px 4px 0 30px; flex: none; }
.p-num span { width: 75px; letter-spacing: -0.5px; }
.slider { width: 44px; height: 9px; border-left: 2px solid #777; background: linear-gradient(#999, #999) 0 50% / 100% 1px no-repeat; }
.spin { margin-left: auto; width: 68px; height: 19px; background: #fff; border: 1px solid #b5b5b5; padding: 0 5px; line-height: 17px; display: flex; justify-content: space-between; color: #333; }
.spin em { display: flex; flex-direction: column; gap: 6px; padding-top: 3px; }
.spin em i { border: 2.500px solid transparent; border-top: 3px solid #555; border-bottom: 0; }
.spin em i.u { border-bottom: 3px solid #555; border-top: 0; }
.pscroll { width: 14px; display: flex; flex-direction: column; background: #d9d9d9; height: 381px; }
.thumb-p { height: 204px; background: #fff; border: 1px solid #b0b0b0; margin-bottom: auto; }
.edge { width: 5px; }

.status { height: 19px; background: #f1f1f1; border-top: 1px solid #d5d5d5; display: flex; align-items: center; flex: none; font-size: 11px; letter-spacing: -0.3px; }
.s-ready { width: 45px; padding-left: 8px; } .s-rec { width: 69px; margin-left: 8px; } .s-mac { margin-right: 622px; }
.s-avg { width: 180px; } .s-sum { width: 68px; letter-spacing: -0.5px; }
.views { display: flex; height: 18px; } .views b { width: 35.600px; display: flex; align-items: center; justify-content: center; } .views .on { background: #c8c8c8; }
.zoom { margin-left: 7px; } .s-zoom { margin-left: 13px; letter-spacing: -0.5px; }
.taskbar { height: 3px; background: #15181d; flex: none; }

.mini { position: absolute; left: 777px; top: 240px; width: 178px; height: 58.500px; background: #fff; border: 1px solid #c6c6c6; box-shadow: 1px 1px 3px #0003; display: flex; padding: 6px 0 0 9px; }
.m-b { width: 41px; flex: none; display: flex; flex-wrap: wrap; align-content: flex-start; color: #555; }
.m-b i { margin: 9px 0 0 1px; height: 0; border-width: 3px 2.500px 0; }
.m-b span { width: 100%; padding: 3px 0 0 4px; letter-spacing: -0.3px; }
.m-o span { padding-left: 0; margin-left: -7px; }
.m-sel { width: 90px; height: 22px; margin: 11px 0 0 -7px; border: 1px solid #bbb; display: flex; align-items: center; justify-content: space-between; padding: 0 4px 0 2px; font-size: 11.300px; background: #fff; }

.menu { position: absolute; left: 776px; top: 313.500px; width: 159px; height: 402px; background: #fff; border: 1px solid #c6c6c6; box-shadow: 1px 1px 3px #0003; padding: 0 1px; color: #555; letter-spacing: -0.35px; }
.mi { display: flex; align-items: center; height: 22.500px; padding-left: 4px; position: relative; }
.mi > svg { width: 15px; margin-right: 10px; }
.mi.off { color: #aaa; }
.mi.hot { background: #c4c4c4; color: #444; }
.mhead { height: 21.500px; background: linear-gradient(90deg, #fff 24px, #ebebeb 24px); font-weight: 700; letter-spacing: -0.6px; }
.mhead > svg { margin-right: 12px; }
.mpaste { height: 26.600px; padding: 2px 0 0 28px; }
.sep { height: 2px; margin-left: 30px; border-top: 1px solid #dcdcdc; }
.mi em { margin-left: auto; width: 22px; height: 13px; display: flex; align-items: center; padding-left: 9px; }
.mi em.split { border-left: 1px solid #e0e0e0; padding-left: 8px; }
.mi em i { border: 3.500px solid transparent; border-left: 4px solid #aaa; border-right: 0; }
.cursor { position: absolute; left: 806px; top: 497px; }
</style>
